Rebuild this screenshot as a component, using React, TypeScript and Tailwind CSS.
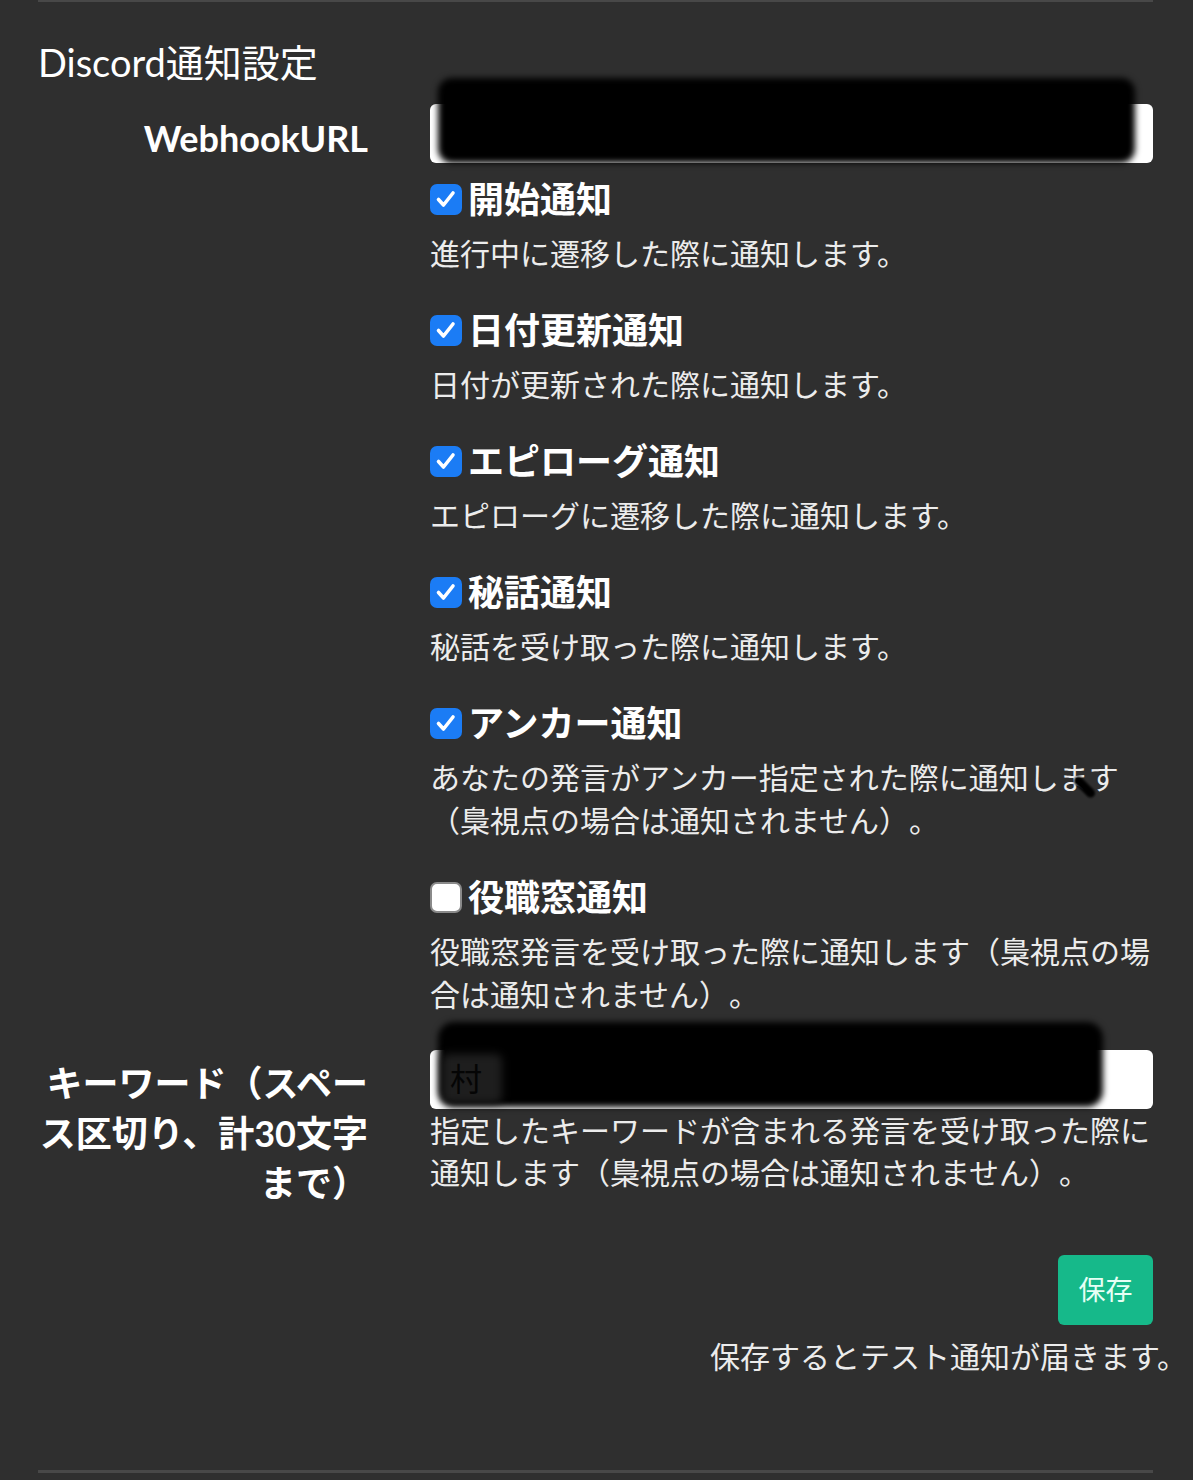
import React from "react";

function Check({ checked }: { checked: boolean }) {
  if (checked) {
    return (
      <span className="flex h-[31px] w-[32px] shrink-0 items-center justify-center rounded-[7px] bg-[#1b7cf5]">
        <svg width="24" height="24" viewBox="0 0 24 24" fill="none">
          <path d="M4.5 12.5 L9.5 18 L19 6" stroke="white" strokeWidth="3.6" strokeLinecap="round" strokeLinejoin="round" />
        </svg>
      </span>
    );
  }
  return <span className="h-[31px] w-[32px] shrink-0 rounded-[7px] border-2 border-[#8a8a8a] bg-white" />;
}

const items = [
  { title: "開始通知", desc: "進行中に遷移した際に通知します。", checked: true },
  { title: "日付更新通知", desc: "日付が更新された際に通知します。", checked: true },
  { title: "エピローグ通知", desc: "エピローグに遷移した際に通知します。", checked: true },
  { title: "秘話通知", desc: "秘話を受け取った際に通知します。", checked: true },
  {
    title: "アンカー通知",
    desc: "あなたの発言がアンカー指定された際に通知します（梟視点の場合は通知されません）。",
    checked: true,
    mark: true,
  },
  {
    title: "役職窓通知",
    desc: "役職窓発言を受け取った際に通知します（梟視点の場合は通知されません）。",
    checked: false,
  },
];

export default function App() {
  return (
    <div
      className="min-h-[1480px] bg-[#2f2f2f] pl-[38px] pr-[40px] text-white [text-spacing-trim:space-all]"
      style={{ fontFamily: 'Lato, "Noto Sans CJK JP", sans-serif' }}
    >
      <div className="h-[2px] bg-[#484848]" />
      <h2 className="mt-[39px] text-[38px] font-normal leading-[43px] text-white">Discord通知設定</h2>

      <div className="mt-[20px] flex">
        <div className="w-[330px] shrink-0 pt-[9px] text-right text-[36px] font-bold leading-[50px]">WebhookURL</div>
        <div className="ml-[62px] w-[723px]">
          <div className="relative h-[59px] rounded-[6px] bg-white">
            <div className="absolute bottom-0 left-[8px] right-[18px] top-[-26px] rounded-[14px] bg-black blur-[3px]" />
          </div>
          {items.map((it, i) => (
            <div key={it.title} className={i === 0 ? "mt-[14px]" : "mt-[33px]"}>
              <div className="flex items-center gap-[6px]">
                <Check checked={it.checked} />
                <span className="text-[36px] font-bold leading-[44px]">{it.title}</span>
              </div>
              <p className="relative mt-[11px] text-[30px] leading-[43px] text-[#ececec]">
                {it.desc}
                {it.mark && (
                  <span className="absolute left-[650px] top-[18px] h-[26px] w-[9px] -rotate-45 rounded-full bg-black blur-[1px]" />
                )}
              </p>
            </div>
          ))}
        </div>
      </div>

      <div className="mt-[34px] flex">
        <div className="w-[330px] shrink-0 pt-[8px] text-right text-[36px] font-bold leading-[50px]">
          キーワード（スペース区切り、計30文字まで）
        </div>
        <div className="ml-[62px] w-[723px]">
          <div className="relative h-[59px] rounded-[6px] bg-white">
            <div className="absolute bottom-[2px] left-[8px] right-[50px] top-[-28px] rounded-[16px] bg-black blur-[3px]" />
            <div className="absolute bottom-[6px] left-[12px] top-[4px] w-[60px] rounded-[6px] bg-[#1e1e1e] blur-[4px]" />
            <span className="absolute left-[20px] top-[7px] text-[32px] leading-[43px] text-[#050505]">村</span>
          </div>
          <p className="text-[30px] leading-[42px] text-[#ececec]">
            指定したキーワードが含まれる発言を受け取った際に通知します（梟視点の場合は通知されません）。
          </p>
        </div>
      </div>

      <div className="mt-[47px] flex flex-col items-end">
        <button className="flex h-[70px] w-[95px] items-center justify-center rounded-[6px] bg-[#16b98a] text-[27px] text-[#e6fff5]">
          保存
        </button>
        <p className="-mr-[34px] mt-[10px] text-[30px] leading-[43px] text-[#ececec]">保存するとテスト通知が届きます。</p>
      </div>

      <div className="mt-[92px] h-[3px] bg-[#484848]" />
    </div>
  );
}
